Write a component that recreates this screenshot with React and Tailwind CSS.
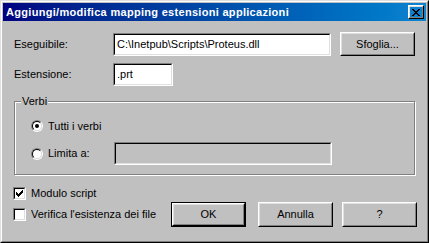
import React from "react";

// Win98-style 3D helpers
function Field({ className = "", disabled = false, children }) {
  return (
    <div className={`border border-t-[#808080] border-l-[#808080] border-r-white border-b-white ${className}`}>
      <div
        className={`h-full border border-t-black border-l-black border-r-[#dfdfdf] border-b-[#dfdfdf] flex items-center px-[2px] ${
          disabled ? "bg-[#c0c0c0]" : "bg-white"
        }`}
      >
        {children}
      </div>
    </div>
  );
}

function Button({ className = "", isDefault = false, children }) {
  const face = (
    <div className="h-full border border-t-white border-l-white border-r-black border-b-black">
      <div className="h-full border border-t-[#dfdfdf] border-l-[#dfdfdf] border-r-[#808080] border-b-[#808080] flex items-center justify-center">
        {children}
      </div>
    </div>
  );
  if (isDefault) {
    return <div className={`border border-black ${className}`}>{face}</div>;
  }
  return <div className={className}>{face}</div>;
}

function Radio({ checked }) {
  return (
    <div className="w-[12px] h-[12px] rounded-full border border-t-[#808080] border-l-[#808080] border-r-white border-b-white shrink-0">
      <div className="w-full h-full rounded-full border border-t-black border-l-black border-r-[#dfdfdf] border-b-[#dfdfdf] bg-white flex items-center justify-center">
        {checked && <div className="w-[4px] h-[4px] rounded-full bg-black" />}
      </div>
    </div>
  );
}

function Checkbox({ checked }) {
  return (
    <div className="w-[13px] h-[13px] border border-t-[#808080] border-l-[#808080] border-r-white border-b-white shrink-0">
      <div className="w-full h-full border border-t-black border-l-black border-r-[#dfdfdf] border-b-[#dfdfdf] bg-white flex items-center justify-center">
        {checked && (
          <svg width="7" height="7" viewBox="0 0 7 7" shapeRendering="crispEdges">
            <path d="M0 2h1v3H0zM1 3h1v3H1zM2 4h1v3H2zM3 3h1v3H3zM4 2h1v3H4zM5 1h1v3H5zM6 0h1v3H6z" fill="#000" />
          </svg>
        )}
      </div>
    </div>
  );
}

export default function App() {
  return (
    <div
      className="w-[429px] h-[243px] bg-[#c0c0c0] text-black text-[11px] leading-none border border-t-[#dfdfdf] border-l-[#dfdfdf] border-r-black border-b-black"
      style={{ fontFamily: '"Liberation Sans", Arial, sans-serif' }}
    >
      <div className="h-full border border-t-white border-l-white border-r-[#808080] border-b-[#808080] p-px flex flex-col">
        {/* TITLE BAR */}
        <div className="h-[18px] bg-linear-to-r from-[#000080] to-[#1084d0] flex items-center pl-[3px] pr-[2px] shrink-0">
          <span className="text-white font-bold text-[11px] tracking-[0.3px] flex-1">
            Aggiungi/modifica mapping estensioni applicazioni
          </span>
          <Button className="w-[16px] h-[14px]">
            <svg width="8" height="7" viewBox="0 0 8 7" shapeRendering="crispEdges">
              <path
                d="M0 0h2v1H0zM6 0h2v1H6zM1 1h2v1H1zM5 1h2v1H5zM2 2h4v1H2zM3 3h2v1H3zM2 4h4v1H2zM1 5h2v1H1zM5 5h2v1H5zM0 6h2v1H0zM6 6h2v1H6z"
                fill="#000"
              />
            </svg>
          </Button>
        </div>

        {/* CONTENT */}
        <div className="flex flex-col pl-[10px] pr-[9px]">
          <div className="flex items-center mt-[11px] h-[24px]">
            <span className="w-[100px] pl-px">Eseguibile:</span>
            <Field className="w-[218px] h-[23px]">
              <span>C:\Inetpub\Scripts\Proteus.dll</span>
            </Field>
            <Button className="w-[75px] h-[24px] ml-[9px]">Sfoglia...</Button>
          </div>

          <div className="flex items-center mt-[7px] h-[23px]">
            <span className="w-[100px] pl-px">Estensione:</span>
            <Field className="w-[60px] h-[23px]">
              <span>.prt</span>
            </Field>
          </div>

          {/* VERBI GROUP */}
          <div className="relative ml-px mt-[15px] w-[401px] h-[74px] border border-[#808080] shadow-[inset_1px_1px_0_#fff,1px_1px_0_#fff] pl-[16px] pt-[16px]">
            <span className="absolute -top-[6px] left-[6px] bg-[#c0c0c0] px-px">Verbi</span>
            <div className="flex items-center h-[16px]">
              <Radio checked />
              <span className="ml-[5px]">Tutti i verbi</span>
            </div>
            <div className="flex items-center mt-[8px] h-[23px]">
              <Radio />
              <span className="ml-[5px] w-[66px]">Limita a:</span>
              <Field className="w-[218px] h-[23px]" disabled />
            </div>
          </div>

          <div className="flex items-center mt-[10px] h-[16px]">
            <Checkbox checked />
            <span className="ml-[5px]">Modulo script</span>
          </div>

          <div className="flex items-center mt-px h-[25px]">
            <Checkbox />
            <span className="ml-[5px] flex-1">Verifica l'esistenza dei file</span>
            <Button isDefault className="w-[75px] h-[25px]">OK</Button>
            <Button className="w-[75px] h-[25px] ml-[12px]">Annulla</Button>
            <Button className="w-[75px] h-[25px] ml-[9px]">?</Button>
          </div>
        </div>
      </div>
    </div>
  );
}
